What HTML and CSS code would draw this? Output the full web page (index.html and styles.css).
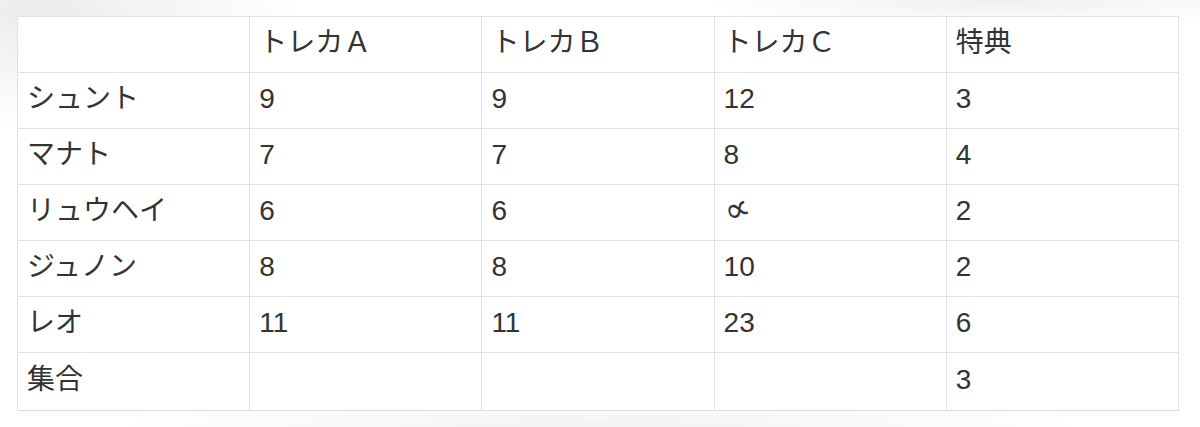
FILE: index.html
```html
<!DOCTYPE html>
<html lang="ja">
<head>
<meta charset="utf-8">
<title>トレカ</title>
<link rel="stylesheet" href="styles.css">
</head>
<body>
<div class="page">
<table class="grid">
<tbody>
<tr><td></td><td>トレカＡ</td><td>トレカＢ</td><td>トレカＣ</td><td>特典</td></tr>
<tr><td>シュント</td><td>9</td><td>9</td><td>12</td><td>3</td></tr>
<tr><td>マナト</td><td>7</td><td>7</td><td>8</td><td>4</td></tr>
<tr><td>リュウヘイ</td><td>6</td><td>6</td><td><span class="sym">∝</span></td><td>2</td></tr>
<tr><td>ジュノン</td><td>8</td><td>8</td><td>10</td><td>2</td></tr>
<tr><td>レオ</td><td>11</td><td>11</td><td>23</td><td>6</td></tr>
<tr class="last"><td>集合</td><td></td><td></td><td></td><td>3</td></tr>
</tbody>
</table>
</div>
</body>
</html>
```

FILE: styles.css
```css
html, body {
  margin: 0;
  padding: 0;
}
body {
  width: 1200px;
  height: 427px;
  overflow: hidden;
  background:
    radial-gradient(ellipse 260px 120px at 40px 10px, #ececec 0%, rgba(255,255,255,0) 100%),
    radial-gradient(ellipse 300px 30px at 1000px 0px, #f0f0f0 0%, rgba(255,255,255,0) 100%),
    radial-gradient(ellipse 500px 30px at 600px 427px, #f2f2f2 0%, rgba(255,255,255,0) 100%),
    #ffffff;
  font-family: "Liberation Sans", "Noto Sans CJK JP", sans-serif;
  color: #333333;
}
.page {
  padding: 16px 21px 0 17px;
}
.grid {
  width: 1162px;
  border-collapse: collapse;
  table-layout: fixed;
  background: #ffffff;
}
.grid td {
  border: 1px solid #e2e2e2;
  height: 51px;
  padding: 0 0 4px 9px;
  font-size: 28px;
  line-height: 1;
  vertical-align: middle;
  white-space: nowrap;
}
.grid tr.last td {
  height: 53px;
  border-bottom-color: #dcdcdc;
}
.sym {
  display: inline-block;
  font-family: "DejaVu Sans", sans-serif;
  font-style: italic;
  font-size: 36px;
  line-height: 28px;
  transform: rotate(-20deg);
}
```
